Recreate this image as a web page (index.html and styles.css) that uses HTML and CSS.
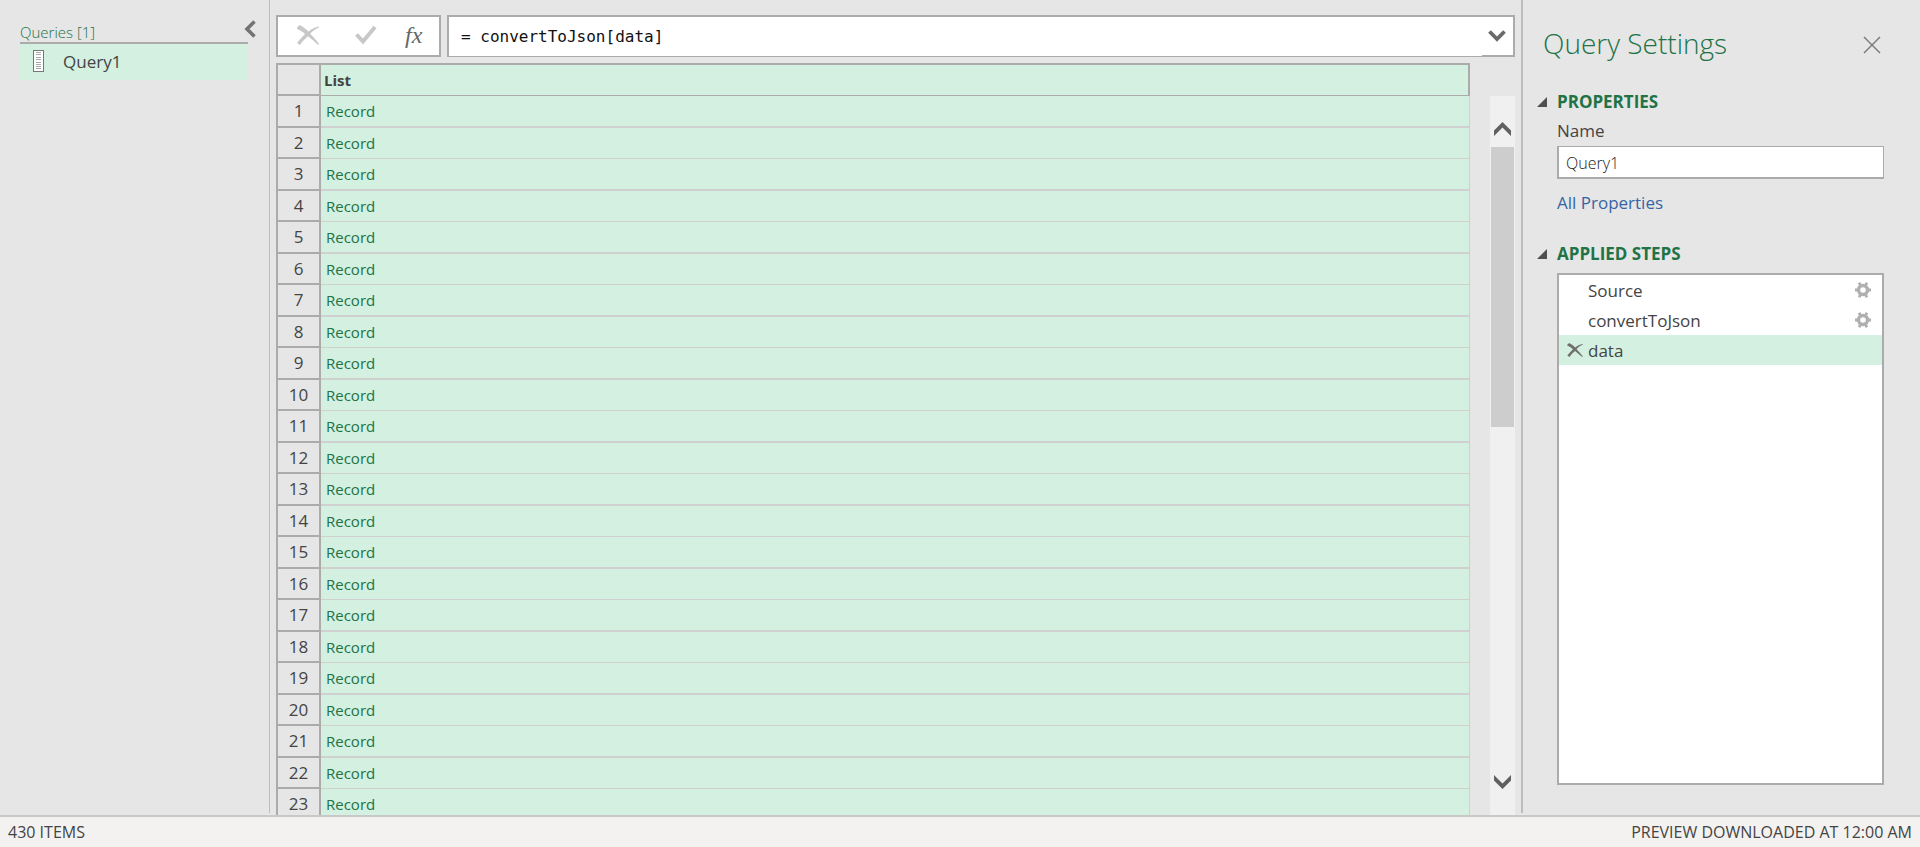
FILE: index.html
```html
<!DOCTYPE html>
<html lang="en">
<head>
<meta charset="utf-8">
<title>Query Editor</title>
<link rel="stylesheet" href="styles.css">
</head>
<body>
<div class="app">
  <main class="workspace">
    <aside class="queries">
      <div class="queries-main">
        <h2 class="queries-title">Queries [1]</h2>
        <button class="query-item" type="button">
          <svg class="list-icon" width="11" height="22" viewBox="0 0 11 22" aria-hidden="true"><rect x=".5" y=".5" width="10" height="21" fill="#fff" stroke="#777"/><path d="M3 2.500h5M3 4.500h5M3 7.500h5M3 9.500h5M3 12.500h5M3 14.500h5M3 16.500h5M3 18.500h5" stroke="#a8a8a8"/></svg>
          <span>Query1</span>
        </button>
      </div>
      <button class="collapse icon-button" type="button" aria-label="Collapse queries"><svg width="12" height="18" viewBox="0 0 12 18"><path d="M10.500 1.500 3 9l7.500 7.500" fill="none" stroke="#737373" stroke-width="3.600"/></svg></button>
    </aside>

    <section class="editor">
      <div class="formula-bar">
        <div class="formula-actions">
          <button class="icon-button" type="button" aria-label="Cancel"><svg width="22" height="20" viewBox="0 0 22 20"><path d="M0 2.500 2.500 0c3.500 1.500 6.500 4 9 6.500C14.500 4 17.500 2.500 22 1.500v1C18.500 4 15.500 6 13.200 8.800c3.300 3.200 6.300 6.700 8.800 10.200l-.8 1C18 17 14.500 14 11 11.300 8 13.800 5.300 16.800 3 20L0 18C2.300 15 5 12 8 9 5.500 6.500 2.500 5 0 4z" fill="#c8c8c8"/></svg></button>
          <button class="icon-button" type="button" aria-label="Accept"><svg width="22" height="20" viewBox="0 0 22 20"><path d="m1.500 9.500 6.500 7L20 2" fill="none" stroke="#c8c8c8" stroke-width="4"/></svg></button>
          <button class="icon-button fx" type="button" aria-label="Insert step">fx</button>
        </div>
        <div class="formula-field">
          <input class="formula-input" type="text" aria-label="Formula" value="= convertToJson[data]">
          <button class="expand icon-button" type="button" aria-label="Expand formula bar"><svg width="18" height="12" viewBox="0 0 18 12"><path d="m1.500 1.500 7.500 7.500 7.500-7.500" fill="none" stroke="#6a6a6a" stroke-width="3.800"/></svg></button>
        </div>
      </div>
      <div class="preview">
        <div class="grid-clip">
          <table class="grid">
            <thead><tr><td class="corner"></td><th class="column-name" scope="col">List</th></tr></thead>
            <tbody id="rows"></tbody>
          </table>
        </div>
        <div class="scrollbar">
          <button class="scroll-up icon-button" type="button" aria-label="Scroll up"><svg width="17" height="14" viewBox="0 0 17 14"><path d="M0 8.500 8.500 0 17 8.500V14L8.500 5.500 0 14z" fill="#606060"/></svg></button>
          <div class="thumb"></div>
          <button class="scroll-down icon-button" type="button" aria-label="Scroll down"><svg width="17" height="14" viewBox="0 0 17 14"><path d="M0 0l8.500 8.500L17 0v5.500L8.500 14 0 5.500z" fill="#606060"/></svg></button>
        </div>
      </div>
    </section>

    <aside class="settings">
      <header class="settings-header">
        <h1 class="settings-title">Query Settings</h1>
        <button class="icon-button" type="button" aria-label="Close"><svg width="18" height="18" viewBox="0 0 18 18"><path d="m1 1 16 16M17 1 1 17" stroke="#777" stroke-width="1.400"/></svg></button>
      </header>
      <h2 class="section-title"><svg width="10" height="10" viewBox="0 0 10 10" aria-hidden="true"><path d="M10 0v10H0z" fill="#505050"/></svg>PROPERTIES</h2>
      <div class="properties">
        <label class="name-label" for="query-name">Name</label>
        <input class="name-input" id="query-name" type="text" value="Query1">
        <a class="all-properties" href="#">All Properties</a>
      </div>
      <h2 class="section-title"><svg width="10" height="10" viewBox="0 0 10 10" aria-hidden="true"><path d="M10 0v10H0z" fill="#505050"/></svg>APPLIED STEPS</h2>
      <svg width="0" height="0" class="symbols" aria-hidden="true"><symbol id="gear" viewBox="0 0 16 16"><circle cx="8" cy="8" r="4.500" fill="none" stroke="#b0b0b0" stroke-width="3.400"/><path d="M0 8h3M13 8h3M4 .8l2 3.200M12 .8l-2 3.200M4 15.200l2-3.200M12 15.200l-2-3.200" stroke="#b0b0b0" stroke-width="2.800"/></symbol></svg>
      <ul class="steps">
        <li class="step"><span class="step-name">Source</span><button class="icon-button" type="button" aria-label="Edit Source"><svg width="16" height="16"><use href="#gear"/></svg></button></li>
        <li class="step"><span class="step-name">convertToJson</span><button class="icon-button" type="button" aria-label="Edit convertToJson"><svg width="16" height="16"><use href="#gear"/></svg></button></li>
        <li class="step selected"><button class="icon-button" type="button" aria-label="Delete data"><svg width="16" height="14" viewBox="0 0 22 20"><path d="M0 2.500 2.500 0c3.500 1.500 6.500 4 9 6.500C14.500 4 17.500 2.500 22 1.500v1C18.500 4 15.500 6 13.200 8.800c3.300 3.200 6.300 6.700 8.800 10.200l-.8 1C18 17 14.500 14 11 11.300 8 13.800 5.300 16.800 3 20L0 18C2.300 15 5 12 8 9 5.500 6.500 2.500 5 0 4z" fill="#707070"/></svg></button><span class="step-name">data</span></li>
      </ul>
    </aside>
  </main>
  <footer class="status"><span>430 ITEMS</span><span>PREVIEW DOWNLOADED AT 12:00 AM</span></footer>
</div>
<script src="rows.js"></script>
</body>
</html>
```
FILE: rows.js
```js
const body = document.getElementById("rows");
for (let i = 1; i <= 23; i++) {
  const row = body.insertRow();
  const number = document.createElement("th");
  number.scope = "row";
  number.className = "row-number";
  number.textContent = i;
  row.append(number);
  const cell = row.insertCell();
  cell.className = "record";
  const link = document.createElement("a");
  link.href = "#";
  link.textContent = "Record";
  cell.append(link);
}
```
FILE: styles.css
```css
* { box-sizing: border-box; }
body {
  margin: 0;
  background: #e6e6e6;
  color: #444;
  font: 17px/24px "Open Sans", "Noto Sans", sans-serif;
}
h1, h2, ul { margin: 0; padding: 0; font: inherit; }
button, input { font: inherit; color: inherit; border: 0; border-radius: 0; padding: 0; outline: 0; }
a { text-decoration: none; }
svg { display: block; flex: none; }
.app { display: grid; grid-template-rows: minmax(0, 1fr) auto; height: 100vh; }
.workspace { display: grid; grid-template-columns: 270px minmax(0, 1fr) 399px; min-height: 0; }
.icon-button { display: flex; align-items: center; justify-content: center; background: none; }

.queries { display: flex; align-items: flex-start; padding: 20px 13px 0 20px; margin-bottom: 2px; border-right: 1px solid #bdbdbd; }
.queries-main { flex: 1; }
.queries-title { height: 24px; border-bottom: 2px solid #ababab; color: #217346; font-size: 15px; font-weight: 300; }
.query-item { display: flex; align-items: center; gap: 19px; width: 100%; height: 36px; padding: 0 13px; background: #d3f0e0; text-align: left; }
.query-item .list-icon { margin-bottom: 2px; }
.collapse { margin-left: -4px; }

.editor { display: flex; flex-direction: column; gap: 6px; min-height: 0; padding: 15px 6px 0; }
.formula-bar { display: flex; gap: 6px; height: 42px; }
.formula-actions { display: flex; width: 165px; gap: 36px; align-items: center; padding: 0 17px 2px 19px; background: #fff; border: 2px solid #ababab; }
.fx { margin-left: -8px; color: #666; font: italic 24px/26px "Liberation Serif", serif; }
.formula-field { display: flex; flex: 1; background: #fff; border: 2px solid #ababab; border-bottom-width: 1px; }
.formula-input { flex: 1; min-width: 0; padding-left: 12px; background: none; color: #111; font: 16px/24px "DejaVu Sans Mono", "Liberation Mono", monospace; }
.expand { width: 31px; padding-right: 2px; border-bottom: 1px solid #ababab; }
.preview { display: flex; flex: 1; gap: 20px; min-height: 0; }
.grid-clip { flex: 1; min-width: 0; overflow: hidden; }
.grid { width: 100%; border-spacing: 0; table-layout: fixed; line-height: 24px; }
.grid td, .grid th { padding: 0; text-align: left; }
.grid .corner { width: 45px; height: 33px; border: 2px solid #ababab; }
.grid .column-name { padding-left: 3px; background: #d3f0e0; border: solid #ababab; border-width: 2px 2px 1px 0; font-size: 15px; }
.grid .row-number { height: 32px; border: solid #ababab; border-width: 0 2px 2px; font-weight: 400; text-align: center; }
.grid .record { padding-left: 5px; background: #d3f0e0; border: solid #d0d0d0; border-width: 0 1px 2px 0; font-size: 15px; }
.record a { color: #217346; }
.grid tbody tr:nth-child(even) .row-number { height: 31px; }
.grid tbody tr:nth-child(even) .record { border-bottom-width: 1px; }
.scrollbar { display: flex; flex-direction: column; width: 25px; margin-top: 33px; padding: 0 1px; background: #f0f0f0; }
.scroll-up { height: 51px; padding-top: 15px; }
.thumb { height: 39%; background: #cdcdcd; }
.scroll-down { height: 51px; margin-top: auto; padding-bottom: 15px; }

.settings { display: flex; flex-direction: column; padding: 22px 36px 28px 14px; margin-bottom: 2px; border-left: 2px solid #bdbdbd; }
.settings-header { display: flex; align-items: center; justify-content: space-between; padding: 0 3px 0 6px; margin-bottom: 26px; color: #217346; }
.settings-header .icon-button { padding-top: 4px; }
.settings-title { font-size: 28px; line-height: 42px; font-weight: 300; }
.section-title { display: flex; align-items: center; gap: 10px; color: #217346; font-weight: 700; }
.properties { display: flex; flex-direction: column; padding-left: 20px; margin: 5px 0 27px; }
.name-label { padding-bottom: 3px; }
.name-input { width: 100%; height: 33px; padding: 2px 7px 0; background: #fff; border: solid #ababab; border-width: 1px 1px 2px 2px; font-size: 16px; font-weight: 300; color: #222; }
.all-properties { align-self: flex-start; margin-top: 12px; color: #3565a3; }
.symbols { position: absolute; }
.steps { flex: 1; margin: 7px 0 0 20px; list-style: none; background: #fff; border: 2px solid #ababab; }
.step { display: flex; align-items: center; justify-content: space-between; height: 30px; padding: 0 11px 0 29px; }
.step-name { padding-top: 2px; }
.step.selected { justify-content: flex-start; gap: 5px; padding-left: 8px; background: #d3f0e0; }

.status { display: flex; justify-content: space-between; height: 32px; padding: 3px 8px 0; background: #f3f2f1; border-top: 2px solid #c8c8c8; font-size: 16px; }
```
